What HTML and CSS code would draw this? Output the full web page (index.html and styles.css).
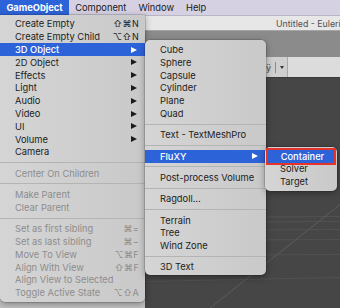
FILE: index.html
```html
<!DOCTYPE html>
<html>
<head>
<meta charset="utf-8">
<link rel="stylesheet" href="styles.css">
</head>
<body>
<div class="app">
  <div class="menubar">
    <span class="mb-item active">GameObject</span>
    <span class="mb-item">Component</span>
    <span class="mb-item">Window</span>
    <span class="mb-item">Help</span>
  </div>
  <div class="titlebar"><span class="title">Untitled - Euleri</span></div>
  <div class="toolbar"></div>
  <div class="subbar">
    <div class="tool"><span class="gl">ÿ</span><span class="tdiv"></span><span class="caret"></span></div>
    <div class="subfill"></div>
  </div>
  <div class="workspace">
    <div class="hierarchy"></div>
    <div class="scene">
      <svg class="grid" width="195" height="230" viewBox="0 0 195 230">
        <g stroke="#525252" stroke-width="1" fill="none">
          <line x1="0" y1="139.5" x2="195" y2="138.5"/>
          <line x1="0" y1="144.5" x2="195" y2="143.5"/>
          <line x1="0" y1="152.5" x2="195" y2="151.5"/>
          <line x1="0" y1="162.5" x2="195" y2="161.5"/>
          <line x1="0" y1="177.5" x2="195" y2="176.5"/>
          <line x1="0" y1="203.5" x2="195" y2="199.5"/>
        </g>
        <line x1="195" y1="126.5" x2="65" y2="230" stroke="#5c5c5c" stroke-width="1"/>
      </svg>
    </div>
  </div>

  <div class="menu main-menu">
    <div class="row"><span class="label">Create Empty</span><span class="sc">⇧⌘N</span></div>
    <div class="row"><span class="label">Create Empty Child</span><span class="sc">⌥⇧N</span></div>
    <div class="row hl"><span class="label">3D Object</span><span class="arrow"></span></div>
    <div class="row"><span class="label">2D Object</span><span class="arrow"></span></div>
    <div class="row"><span class="label">Effects</span><span class="arrow"></span></div>
    <div class="row"><span class="label">Light</span><span class="arrow"></span></div>
    <div class="row"><span class="label">Audio</span><span class="arrow"></span></div>
    <div class="row"><span class="label">Video</span><span class="arrow"></span></div>
    <div class="row"><span class="label">UI</span><span class="arrow"></span></div>
    <div class="row"><span class="label">Volume</span><span class="arrow"></span></div>
    <div class="row"><span class="label">Camera</span></div>
    <div class="sep"></div>
    <div class="row dis"><span class="label">Center On Children</span></div>
    <div class="sep"></div>
    <div class="row dis"><span class="label">Make Parent</span></div>
    <div class="row dis"><span class="label">Clear Parent</span></div>
    <div class="sep"></div>
    <div class="row dis"><span class="label">Set as first sibling</span><span class="sc">⌘=</span></div>
    <div class="row dis"><span class="label">Set as last sibling</span><span class="sc">⌘−</span></div>
    <div class="row dis"><span class="label">Move To View</span><span class="sc">⌥⌘F</span></div>
    <div class="row dis"><span class="label">Align With View</span><span class="sc">⇧⌘F</span></div>
    <div class="row dis"><span class="label">Align View to Selected</span></div>
    <div class="row dis"><span class="label">Toggle Active State</span><span class="sc">⌥⇧A</span></div>
  </div>

  <div class="menu sub-menu">
    <div class="row"><span class="label">Cube</span></div>
    <div class="row"><span class="label">Sphere</span></div>
    <div class="row"><span class="label">Capsule</span></div>
    <div class="row"><span class="label">Cylinder</span></div>
    <div class="row"><span class="label">Plane</span></div>
    <div class="row"><span class="label">Quad</span></div>
    <div class="sep"></div>
    <div class="row"><span class="label">Text - TextMeshPro</span></div>
    <div class="sep"></div>
    <div class="row hl"><span class="label">FluXY</span><span class="arrow"></span></div>
    <div class="sep"></div>
    <div class="row"><span class="label">Post-process Volume</span></div>
    <div class="sep"></div>
    <div class="row"><span class="label">Ragdoll...</span></div>
    <div class="sep"></div>
    <div class="row"><span class="label">Terrain</span></div>
    <div class="row"><span class="label">Tree</span></div>
    <div class="row"><span class="label">Wind Zone</span></div>
    <div class="sep"></div>
    <div class="row"><span class="label">3D Text</span></div>
  </div>

  <div class="menu third-menu">
    <div class="row hl marked"><span class="label">Container</span></div>
    <div class="row"><span class="label">Solver</span></div>
    <div class="row"><span class="label">Target</span></div>
  </div>
</div>
</body>
</html>
```
FILE: styles.css
```css
* { box-sizing: border-box; }

body {
  margin: 0;
  width: 340px;
  height: 308px;
  overflow: hidden;
  font-family: Inter, "Noto Sans", "DejaVu Sans", sans-serif;
  font-size: 9.3px;
  color: #1c1c1c;
  background: #464646;
}

.app {
  position: relative;
  width: 340px;
  height: 308px;
  display: flex;
  flex-direction: column;
  overflow: hidden;
}

.menubar {
  flex: none;
  height: 16px;
  display: flex;
  background: #d5d1e3;
  border-bottom: 1px solid #b9b6c4;
  color: #1a1a1a;
}

.mb-item {
  display: flex;
  align-items: center;
  padding: 0 6px;
}

.mb-item.active {
  background: #2d63d8;
  color: #fff;
  font-weight: 700;
  padding: 0 6.4px;
}

.titlebar {
  flex: none;
  height: 15px;
  display: flex;
  align-items: center;
  padding-left: 276px;
  background: #e7e7e7;
  color: #505050;
  font-size: 8.8px;
  white-space: nowrap;
  overflow: hidden;
  border-bottom: 1px solid #a5a5a5;
}

.toolbar {
  flex: none;
  height: 26px;
  background: #8b8b8b;
}

.subbar {
  flex: none;
  height: 21px;
  display: flex;
  padding-left: 262px;
  background: #c6c6c6;
  border-bottom: 1px solid #3a3a3a;
}

.tool {
  display: flex;
  align-items: center;
  gap: 4px;
  padding: 0 3px 0 4px;
  color: #444;
  font-size: 9px;
  background: #cfcfcf;
}

.tdiv {
  width: 1px;
  height: 11px;
  background: #8a8a8a;
}

.caret {
  width: 0;
  height: 0;
  border-top: 3.5px solid #333;
  border-left: 2.5px solid transparent;
  border-right: 2.5px solid transparent;
}

.subfill {
  flex: 1;
  background: #dcdcdc;
  border-left: 1px solid #a8a8a8;
}

.workspace {
  flex: 1;
  display: flex;
}

.hierarchy {
  width: 145px;
  background: #c2c2c2;
}

.scene {
  flex: 1;
  position: relative;
  background: #464646;
}

.grid {
  position: absolute;
  left: 0;
  top: 0;
}

/* menus */
.menu {
  position: absolute;
  background: linear-gradient(to right, #d5d5d5, #c9c9c9);
  box-shadow: 0 2px 7px rgba(0, 0, 0, 0.35), 0 0 0 0.5px rgba(0, 0, 0, 0.25);
  color: #1c1c1c;
}

.main-menu {
  left: 0;
  top: 15px;
  width: 145px;
  padding: 2.6px 0 2.9px;
  border-radius: 0 0 5px 5px;
}

.sub-menu {
  left: 145px;
  top: 40.2px;
  width: 121px;
  padding: 3px 0 2px;
  border-radius: 5px;
}

.third-menu {
  left: 265px;
  top: 147.3px;
  width: 72px;
  padding: 2.5px 0;
  border-radius: 5px;
}

.row {
  height: 12.8px;
  display: flex;
  align-items: center;
  padding: 0 6px 0 15px;
  white-space: nowrap;
}

.label {
  flex: 1;
}

.sc {
  font-family: Inter, "DejaVu Sans", sans-serif;
  font-size: 9px;
  letter-spacing: 0.3px;
}

.row.dis {
  color: #8d8d8d;
}

.row.hl {
  background: #2d63d8;
  color: #fff;
  font-weight: 500;
}

.arrow {
  width: 0;
  height: 0;
  margin-right: 2px;
  border-left: 6px solid #1c1c1c;
  border-top: 3.5px solid transparent;
  border-bottom: 3.5px solid transparent;
}

.row.hl .arrow {
  border-left-color: #fff;
}

.sep {
  height: 8.5px;
  display: flex;
  align-items: center;
}

.sep::before {
  content: "";
  flex: 1;
  height: 1px;
  background: #b4b4b4;
}

.third-menu .row.marked {
  margin: 0 3px;
  padding-left: 12.7px;
  outline: 2px solid #e5322a;
}
```
